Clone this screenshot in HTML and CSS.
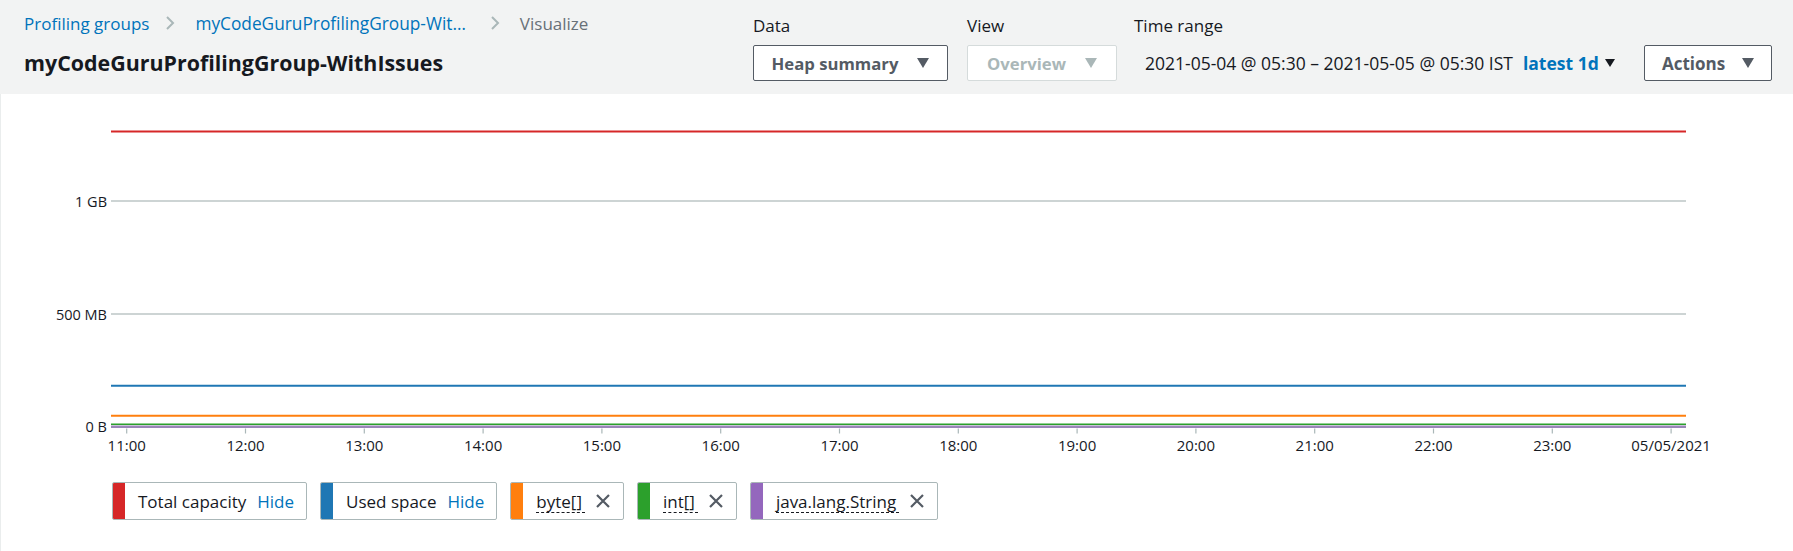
FILE: index.html
```html
<!DOCTYPE html>
<html>
<head>
<meta charset="utf-8">
<link rel="stylesheet" href="styles.css">
</head>
<body>
<header class="header">
  <div class="head-left">
    <nav class="crumbs">
      <a class="crumb-link">Profiling groups</a>
      <svg class="chev" viewBox="0 0 10 16" width="10" height="16"><path d="M2 2 L8 8 L2 14" fill="none" stroke="#aab7b8" stroke-width="2"/></svg>
      <a class="crumb-link crumb-trunc">myCodeGuruProfilingGroup-Wit…</a>
      <svg class="chev" viewBox="0 0 10 16" width="10" height="16"><path d="M2 2 L8 8 L2 14" fill="none" stroke="#aab7b8" stroke-width="2"/></svg>
      <span class="crumb-current">Visualize</span>
    </nav>
    <h1 class="title">myCodeGuruProfilingGroup-WithIssues</h1>
  </div>
  <div class="ctrl ctrl-data">
    <div class="ctrl-label">Data</div>
    <div class="select">
      <span>Heap summary</span>
      <svg class="caret" viewBox="0 0 12 10" width="12" height="10"><path d="M0 0 H12 L6 10 Z" fill="#545b64"/></svg>
    </div>
  </div>
  <div class="ctrl ctrl-view">
    <div class="ctrl-label">View</div>
    <div class="select disabled">
      <span>Overview</span>
      <svg class="caret" viewBox="0 0 12 10" width="12" height="10"><path d="M0 0 H12 L6 10 Z" fill="#aab7b8"/></svg>
    </div>
  </div>
  <div class="ctrl ctrl-time">
    <div class="ctrl-label">Time range</div>
    <div class="time-value">
      <span>2021-05-04 @ 05:30 – 2021-05-05 @ 05:30 IST</span>
      <span class="latest">latest 1d</span>
      <svg class="small-caret" viewBox="0 0 10 8" width="10" height="8"><path d="M0 0 H10 L5 8 Z" fill="#16191f"/></svg>
    </div>
  </div>
  <div class="ctrl ctrl-actions">
    <div class="select actions">
      <span>Actions</span>
      <svg class="caret" viewBox="0 0 12 10" width="12" height="10"><path d="M0 0 H12 L6 10 Z" fill="#545b64"/></svg>
    </div>
  </div>
</header>
<main class="main">
  <svg class="chart" width="1793" height="380" viewBox="0 0 1793 380">
    <g class="grid">
      <line x1="111" y1="107" x2="1686" y2="107"/>
      <line x1="111" y1="220" x2="1686" y2="220"/>
    </g>
    <g class="ylabels">
      <text x="107" y="107">1 GB</text>
      <text x="107" y="220">500 MB</text>
      <text x="107" y="332">0 B</text>
    </g>
    <line x1="111" y1="37.5" x2="1686" y2="37.5" stroke="#d62728" stroke-width="2"/>
    <line x1="111" y1="291.7" x2="1686" y2="291.7" stroke="#1f77b4" stroke-width="2"/>
    <line x1="111" y1="321.7" x2="1686" y2="321.7" stroke="#ff7f0e" stroke-width="2"/>
    <line x1="111" y1="332.8" x2="1686" y2="332.8" stroke="#9a86b8" stroke-width="2.6"/>
    <line x1="111" y1="330.2" x2="1686" y2="330.2" stroke="#2ca02c" stroke-width="1.4"/>
    <g class="ticks">
      <line x1="126.7" y1="334.5" x2="126.7" y2="339.5"/>
      <line x1="245.5" y1="334.5" x2="245.5" y2="339.5"/>
      <line x1="364.3" y1="334.5" x2="364.3" y2="339.5"/>
      <line x1="483.1" y1="334.5" x2="483.1" y2="339.5"/>
      <line x1="601.9" y1="334.5" x2="601.9" y2="339.5"/>
      <line x1="720.7" y1="334.5" x2="720.7" y2="339.5"/>
      <line x1="839.5" y1="334.5" x2="839.5" y2="339.5"/>
      <line x1="958.3" y1="334.5" x2="958.3" y2="339.5"/>
      <line x1="1077.1" y1="334.5" x2="1077.1" y2="339.5"/>
      <line x1="1195.9" y1="334.5" x2="1195.9" y2="339.5"/>
      <line x1="1314.7" y1="334.5" x2="1314.7" y2="339.5"/>
      <line x1="1433.5" y1="334.5" x2="1433.5" y2="339.5"/>
      <line x1="1552.3" y1="334.5" x2="1552.3" y2="339.5"/>
      <line x1="1671.1" y1="334.5" x2="1671.1" y2="339.5"/>
    </g>
    <g class="xlabels">
      <text x="126.7" y="350.5">11:00</text>
      <text x="245.5" y="350.5">12:00</text>
      <text x="364.3" y="350.5">13:00</text>
      <text x="483.1" y="350.5">14:00</text>
      <text x="601.9" y="350.5">15:00</text>
      <text x="720.7" y="350.5">16:00</text>
      <text x="839.5" y="350.5">17:00</text>
      <text x="958.3" y="350.5">18:00</text>
      <text x="1077.1" y="350.5">19:00</text>
      <text x="1195.9" y="350.5">20:00</text>
      <text x="1314.7" y="350.5">21:00</text>
      <text x="1433.5" y="350.5">22:00</text>
      <text x="1552.3" y="350.5">23:00</text>
      <text x="1671.1" y="350.5">05/05/2021</text>
    </g>
  </svg>
  <div class="legend">
    <div class="item">
      <span class="swatch red"></span>
      <span class="item-text">Total capacity</span>
      <a class="hide">Hide</a>
    </div>
    <div class="item">
      <span class="swatch blue"></span>
      <span class="item-text">Used space</span>
      <a class="hide">Hide</a>
    </div>
    <div class="item">
      <span class="swatch orange"></span>
      <span class="item-text dashed">byte[]</span>
      <svg class="close" viewBox="0 0 16 16" width="16" height="16"><path d="M2 2 L14 14 M14 2 L2 14" stroke="#545b64" stroke-width="2.2" fill="none"/></svg>
    </div>
    <div class="item">
      <span class="swatch green"></span>
      <span class="item-text dashed">int[]</span>
      <svg class="close" viewBox="0 0 16 16" width="16" height="16"><path d="M2 2 L14 14 M14 2 L2 14" stroke="#545b64" stroke-width="2.2" fill="none"/></svg>
    </div>
    <div class="item">
      <span class="swatch purple"></span>
      <span class="item-text dashed">java.lang.String</span>
      <svg class="close" viewBox="0 0 16 16" width="16" height="16"><path d="M2 2 L14 14 M14 2 L2 14" stroke="#545b64" stroke-width="2.2" fill="none"/></svg>
    </div>
  </div>
</main>
</body>
</html>
```

FILE: styles.css
```css
* { box-sizing: border-box; }
html, body { margin: 0; padding: 0; background: #ffffff; }
body {
  font-family: "Open Sans", "Liberation Sans", Arial, sans-serif;
  color: #16191f;
  font-size: 17px;
  width: 1793px;
  height: 551px;
  overflow: hidden;
}
.header {
  display: flex;
  height: 94px;
  background: #f2f3f3;
  padding: 0 21px 0 24px;
}
.head-left {
  flex: 1;
  padding-top: 13px;
}
.crumbs {
  display: flex;
  align-items: center;
  height: 20px;
  font-size: 17px;
  white-space: nowrap;
}
.crumb-link { color: #0073bb; }
.crumb-trunc { font-size: 17.3px; padding-right: 8px; }
.crumb-current { color: #687078; }
.chev { margin: 0 20px 0 16px; flex-shrink: 0; }
.title {
  margin: 18px 0 0 0;
  font-size: 21.4px;
  line-height: 24px;
  font-weight: 700;
  color: #16191f;
  white-space: nowrap;
}
.ctrl { padding-top: 16px; flex-shrink: 0; }
.ctrl-label {
  height: 20px;
  line-height: 20px;
  font-size: 17px;
  margin-bottom: 9px;
}
.ctrl-data { width: 195px; margin-right: 19px; }
.ctrl-view { width: 150px; margin-right: 17px; }
.ctrl-time { width: 478px; margin-right: 32px; }
.ctrl-actions { width: 128px; padding-top: 45px; }
.select {
  height: 36px;
  border: 1px solid #545b64;
  border-radius: 2px;
  background: #ffffff;
  display: flex;
  align-items: center;
  justify-content: center;
  font-weight: 700;
  font-size: 16.7px;
  color: #545b64;
  gap: 19px;
  white-space: nowrap;
}
.select.disabled {
  border-color: #d5dbdb;
  color: #aab7b8;
}
.select.actions { gap: 17px; font-size: 17px; }
.caret { display: block; flex-shrink: 0; }
.time-value {
  height: 36px;
  display: flex;
  align-items: center;
  padding-left: 11px;
  font-size: 17.5px;
  white-space: nowrap;
}
.latest {
  color: #0073bb;
  font-weight: 700;
  margin-left: 10px;
  margin-right: 6px;
}
.small-caret { display: block; flex-shrink: 0; }
.main {
  border-left: 1px solid #eaeded;
  height: 457px;
}
.chart { display: block; margin-left: -1px; }
.grid line { stroke: #bcc6c6; stroke-width: 1.5; }
.ticks line { stroke: #aab7b8; stroke-width: 1.2; }
.ylabels text {
  font-family: "Open Sans", "Liberation Sans", Arial, sans-serif;
  font-size: 14.5px;
  fill: #16191f;
  text-anchor: end;
  dominant-baseline: central;
}
.xlabels text {
  font-family: "Open Sans", "Liberation Sans", Arial, sans-serif;
  font-size: 15px;
  fill: #16191f;
  text-anchor: middle;
  dominant-baseline: central;
}
.legend {
  display: flex;
  gap: 13px;
  padding-left: 111px;
  margin-top: 8px;
}
.item {
  height: 38px;
  border: 1px solid #aab7b8;
  border-radius: 2px;
  display: flex;
  align-items: center;
  overflow: hidden;
  padding-right: 12px;
  font-size: 17px;
  white-space: nowrap;
}
.swatch {
  align-self: stretch;
  width: 13px;
  margin-left: -1px;
  margin-right: 13px;
}
.red { background: #d62728; }
.blue { background: #1f77b4; }
.orange { background: #ff7f0e; }
.green { background: #2ca02c; }
.purple { background: #9467bd; }
.hide { color: #0073bb; margin-left: 11px; }
.dashed {
  border-bottom: 1px dashed #16191f;
  padding-right: 3px;
  line-height: 20px;
  margin-top: 2px;
}
.close { margin-left: 10px; display: block; flex-shrink: 0; }
```
